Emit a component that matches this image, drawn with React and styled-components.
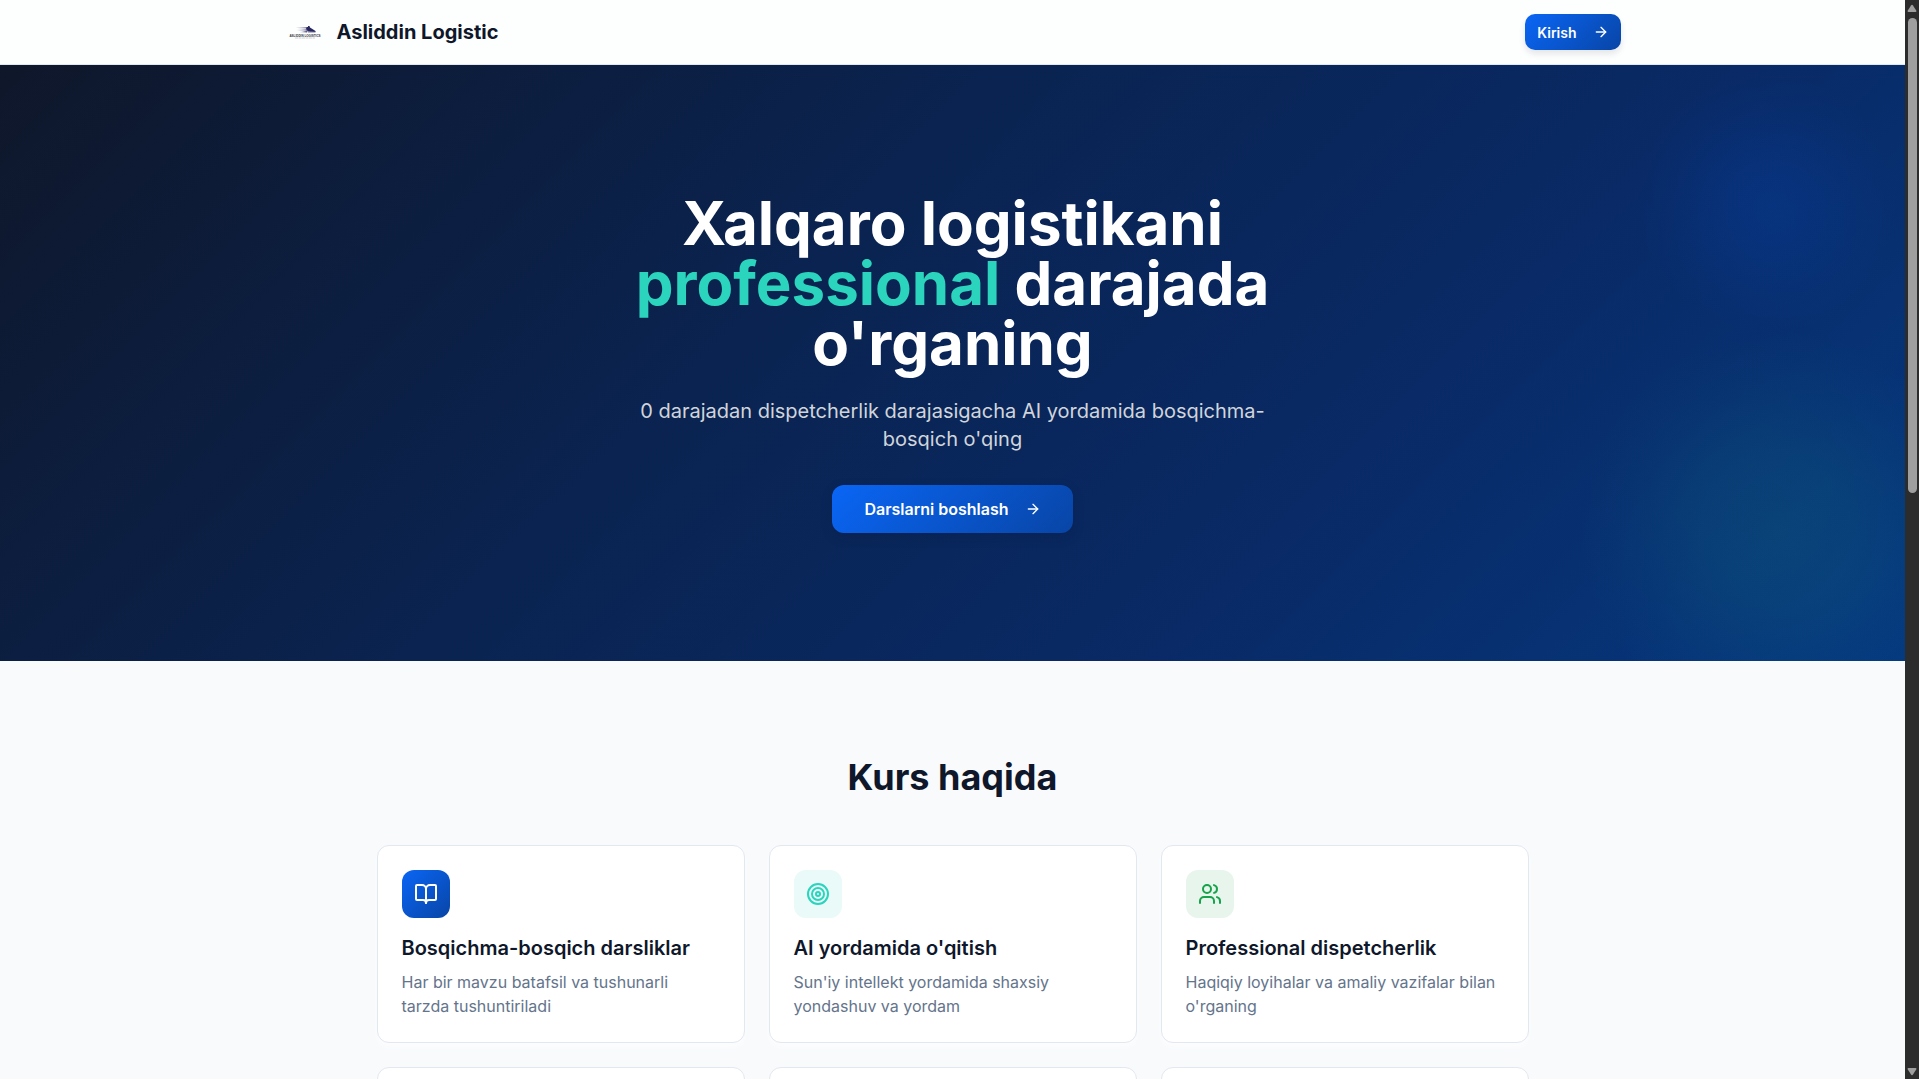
import React from "react";
import styled, { createGlobalStyle, css } from "styled-components";
import { ArrowRight, BookOpen, Target, Users } from "lucide-react";

const GlobalStyle = createGlobalStyle`
  *, *::before, *::after { box-sizing: border-box; }
  body {
    margin: 0;
    background: #f9fafc;
    color: #0f172a;
    font-family: Inter, "Liberation Sans", sans-serif;
    font-size: 16px;
    line-height: 24px;
  }
  h1, h2, h3, p { margin: 0; }
`;

const Shell = styled.div`
  display: flex;
  height: 100vh;
  overflow: hidden;
`;

const Page = styled.div`
  flex: 1;
  min-width: 0;
  overflow: hidden;
`;

const Header = styled.header`
  background: #fdfefe;
  border-bottom: 1px solid #e2e8f0;
`;

const HeaderInner = styled.div`
  display: flex;
  align-items: center;
  justify-content: space-between;
  max-width: 1400px;
  height: 64px;
  margin: 0 auto;
  padding: 0 32px;
`;

const Brand = styled.a`
  display: flex;
  align-items: center;
  gap: 12px;
  color: inherit;
  text-decoration: none;
  font-size: 20px;
  font-weight: 700;
  line-height: 28px;
`;

const Button = styled.button`
  display: inline-flex;
  align-items: center;
  justify-content: center;
  gap: 16px;
  border: 0;
  color: #fff;
  font-family: inherit;
  font-weight: 600;
  cursor: pointer;
  background: linear-gradient(135deg, #0a66f5, #0845a6);
  ${({ $size }) =>
    $size === "lg"
      ? css`
          height: 48px;
          padding: 0 32px;
          border-radius: 12px;
          font-size: 16px;
          box-shadow: 0 4px 12px rgba(8, 20, 50, 0.2);
        `
      : css`
          height: 36px;
          padding: 0 12px;
          border-radius: 10px;
          font-size: 14px;
          box-shadow: 0 4px 6px rgba(15, 23, 42, 0.1);
        `}
`;

const Hero = styled.section`
  padding: 128px 24px;
  text-align: center;
  background:
    radial-gradient(
      circle 130px at calc(100% - 138px) 138px,
      rgba(5, 75, 200, 0.2),
      rgba(5, 75, 200, 0.16) 30%,
      rgba(5, 75, 200, 0.06) 70%,
      transparent
    ),
    radial-gradient(
      circle 200px at calc(100% - 125px) 465px,
      rgba(20, 130, 125, 0.2),
      rgba(20, 130, 130, 0.16) 35%,
      rgba(20, 120, 140, 0.06) 75%,
      transparent
    ),
    linear-gradient(135deg, #0f172a 0%, #0a2350 40%, #092a66 70%, #05387f 100%);
`;

const HeroInner = styled.div`
  display: flex;
  flex-direction: column;
  align-items: center;
  max-width: 672px;
  margin: 0 auto;
`;

const HeroTitle = styled.h1`
  margin-bottom: 24px;
  color: #fff;
  font-size: 60px;
  font-weight: 700;
  line-height: 60px;
`;

const Accent = styled.span`
  color: #2ad4bd;
`;

const HeroText = styled.p`
  margin-bottom: 32px;
  color: #d1d5db;
  font-size: 20px;
  line-height: 28px;
`;

const About = styled.section`
  max-width: 1200px;
  margin: 0 auto;
  padding: 96px 24px;
`;

const SectionTitle = styled.h2`
  margin-bottom: 48px;
  text-align: center;
  font-size: 36px;
  font-weight: 700;
  line-height: 40px;
`;

const Grid = styled.div`
  display: grid;
  grid-template-columns: repeat(3, 1fr);
  gap: 24px;
`;

const Card = styled.article`
  min-height: 198px;
  padding: 24px;
  background: #fff;
  border: 1px solid #e2e8f0;
  border-radius: 12px;
  box-shadow: 0 4px 6px rgba(255, 255, 255, 0.6);
`;

const IconTile = styled.div`
  display: grid;
  place-items: center;
  width: 48px;
  height: 48px;
  margin-bottom: 16px;
  border-radius: 12px;
  color: ${({ $color }) => $color};
  background: ${({ $fill }) => $fill};
`;

const CardTitle = styled.h3`
  margin-bottom: 8px;
  font-size: 20px;
  font-weight: 600;
  line-height: 28px;
`;

const CardText = styled.p`
  color: #64748b;
`;

const Scrollbar = styled.div`
  display: flex;
  flex-direction: column;
  align-items: center;
  width: 14px;
  padding: 4px 0 3px;
  background: #2c2c2c;
`;

const ScrollTrack = styled.div`
  flex: 1;
  width: 9px;
  padding: 6px 0;
`;

const ScrollThumb = styled.div`
  height: 45.5%;
  border-radius: 5px;
  background: #9f9f9f;
`;

const ScrollArrow = styled.svg`
  display: block;
  width: 10px;
  height: 8px;
  fill: #9f9f9f;
`;

function Logo() {
  return (
    <svg width="40" height="40" viewBox="0 0 40 40" aria-hidden="true">
      <defs>
        <linearGradient id="trail" x1="0" x2="1">
          <stop offset="0" stopColor="#8d8bb0" stopOpacity="0.1" />
          <stop offset="1" stopColor="#25215f" stopOpacity="0.8" />
        </linearGradient>
      </defs>
      <path d="M10 15.5L24 15V16.500L14 16.200Z" fill="url(#trail)" />
      <path d="M11 18L26 16.500V18.500L15 18.800Z" fill="url(#trail)" />
      <path d="M14 20.200L22 18.500V20.500Z" fill="url(#trail)" />
      <path d="M21 16.500L22 15H23V14H24.500L25 15.500L27 16.800L30.500 19V20H25L22 18.500Z" fill="#2a2760" />
      <path d="M22 19L30.500 19.700V20.500H23Z" fill="#77769a" />
      <text
        x="20"
        y="24.500"
        textAnchor="middle"
        fontSize="3"
        fontWeight="700"
        fill="#33333c"
        fontFamily="Liberation Sans, sans-serif"
      >
        ASLIDDIN LOGISTICS
      </text>
      <path d="M10 26H30" stroke="#c5c5ca" strokeWidth="0.8" strokeDasharray="3 0.5" />
    </svg>
  );
}

const courses = [
  {
    icon: BookOpen,
    color: "#fff",
    fill: "linear-gradient(135deg, #0a66f5, #0845a6)",
    title: "Bosqichma-bosqich darsliklar",
    text: "Har bir mavzu batafsil va tushunarli tarzda tushuntiriladi",
  },
  {
    icon: Target,
    color: "#2ad4bd",
    fill: "#e9faf8",
    title: "AI yordamida o'qitish",
    text: "Sun'iy intellekt yordamida shaxsiy yondashuv va yordam",
  },
  {
    icon: Users,
    color: "#16a34a",
    fill: "#e8f5ed",
    title: "Professional dispetcherlik",
    text: "Haqiqiy loyihalar va amaliy vazifalar bilan o'rganing",
  },
];

export default function App() {
  return (
    <>
      <GlobalStyle />
      <Shell>
        <Page>
          <Header>
            <HeaderInner>
              <Brand href="#">
                <Logo />
                Asliddin Logistic
              </Brand>
              <Button type="button">
                Kirish
                <ArrowRight size={16} />
              </Button>
            </HeaderInner>
          </Header>
          <main>
            <Hero>
              <HeroInner>
                <HeroTitle>
                  Xalqaro logistikani <Accent>professional</Accent> darajada o'rganing
                </HeroTitle>
                <HeroText>
                  0 darajadan dispetcherlik darajasigacha AI yordamida bosqichma-bosqich o'qing
                </HeroText>
                <Button type="button" $size="lg">
                  Darslarni boshlash
                  <ArrowRight size={16} />
                </Button>
              </HeroInner>
            </Hero>
            <About>
              <SectionTitle>Kurs haqida</SectionTitle>
              <Grid>
                {courses.map(({ icon: Icon, color, fill, title, text }) => (
                  <Card key={title}>
                    <IconTile $color={color} $fill={fill}>
                      <Icon size={24} />
                    </IconTile>
                    <CardTitle>{title}</CardTitle>
                    <CardText>{text}</CardText>
                  </Card>
                ))}
                <Card />
                <Card />
                <Card />
              </Grid>
            </About>
          </main>
        </Page>
        <Scrollbar aria-hidden="true">
          <ScrollArrow viewBox="0 0 10 8">
            <path d="M4 1.500Q5 0 6 1.500L9.500 7Q9.500 8 8.500 8H1.500Q0.500 8 0.500 7Z" />
          </ScrollArrow>
          <ScrollTrack>
            <ScrollThumb />
          </ScrollTrack>
          <ScrollArrow viewBox="0 0 10 8">
            <path d="M4 6.500Q5 8 6 6.500L9.500 1Q9.500 0 8.500 0H1.500Q0.500 0 0.500 1Z" />
          </ScrollArrow>
        </Scrollbar>
      </Shell>
    </>
  );
}
